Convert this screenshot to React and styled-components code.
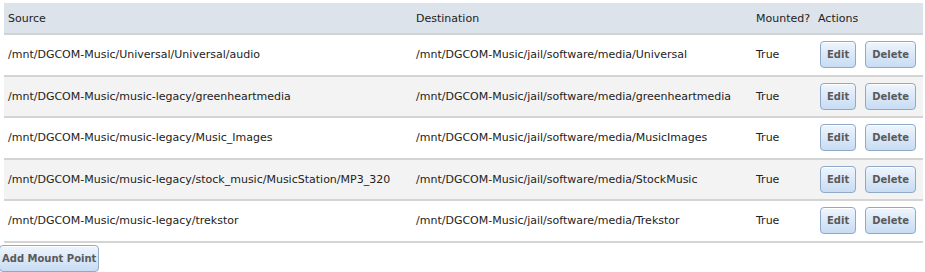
import React from "react";
import styled, { createGlobalStyle } from "styled-components";

const Global = createGlobalStyle`
  html, body { margin: 0; padding: 0; background: #fff; }
  body { font-family: "DejaVu Sans", Verdana, sans-serif; font-size: 11px; color: #222; }
`;

const Page = styled.div`
  padding: 3px 2px 0 4px;
`;

const Table = styled.table`
  width: 919px;
  border-collapse: collapse;
  table-layout: fixed;
`;

const Th = styled.th`
  background: #dce3ea;
  text-align: left;
  font-weight: normal;
  height: 30px;
  padding: 0 4px;
  border-bottom: 2px solid #cfd3d6;
  white-space: nowrap;
`;

const Row = styled.tr`
  background: ${(p) => (p.$alt ? "#f3f3f3" : "#fff")};
`;

const Td = styled.td`
  height: 39.5px;
  padding: 0 4px;
  border-bottom: 2px solid #d4d4d4;
  white-space: nowrap;
  overflow: visible;
`;

const Actions = styled.div`
  display: flex;
  gap: 9px;
  padding-left: 2px;
`;

const Button = styled.button`
  font-family: "DejaVu Sans", Verdana, sans-serif;
  font-size: 10px;
  font-weight: bold;
  color: #5a5a5a;
  height: 27px;
  padding: 0 ${(p) => p.$pad ?? 6}px;
  border: 1px solid #8eaac8;
  border-radius: 4px;
  background: linear-gradient(#eef5fd, #c8dcf3);
  box-shadow: inset 0 1px 0 #fff;
  cursor: pointer;
`;

const Footer = styled.div`
  padding-top: 2px;
  margin-left: -5px;
`;

const rows = [
  ["/mnt/DGCOM-Music/Universal/Universal/audio", "/mnt/DGCOM-Music/jail/software/media/Universal"],
  ["/mnt/DGCOM-Music/music-legacy/greenheartmedia", "/mnt/DGCOM-Music/jail/software/media/greenheartmedia"],
  ["/mnt/DGCOM-Music/music-legacy/Music_Images", "/mnt/DGCOM-Music/jail/software/media/MusicImages"],
  ["/mnt/DGCOM-Music/music-legacy/stock_music/MusicStation/MP3_320", "/mnt/DGCOM-Music/jail/software/media/StockMusic"],
  ["/mnt/DGCOM-Music/music-legacy/trekstor", "/mnt/DGCOM-Music/jail/software/media/Trekstor"],
];

export default function App() {
  return (
    <Page>
      <Global />
      <Table>
        <colgroup>
          <col style={{ width: 408 }} />
          <col style={{ width: 340 }} />
          <col style={{ width: 62 }} />
          <col style={{ width: 109 }} />
        </colgroup>
        <thead>
          <tr>
            <Th>Source</Th>
            <Th>Destination</Th>
            <Th>Mounted?</Th>
            <Th>Actions</Th>
          </tr>
        </thead>
        <tbody>
          {rows.map(([src, dst], i) => (
            <Row key={i} $alt={i % 2 === 1}>
              <Td>{src}</Td>
              <Td>{dst}</Td>
              <Td>True</Td>
              <Td>
                <Actions>
                  <Button>Edit</Button>
                  <Button>Delete</Button>
                </Actions>
              </Td>
            </Row>
          ))}
        </tbody>
      </Table>
      <Footer>
        <Button $pad={2}>Add Mount Point</Button>
      </Footer>
    </Page>
  );
}
